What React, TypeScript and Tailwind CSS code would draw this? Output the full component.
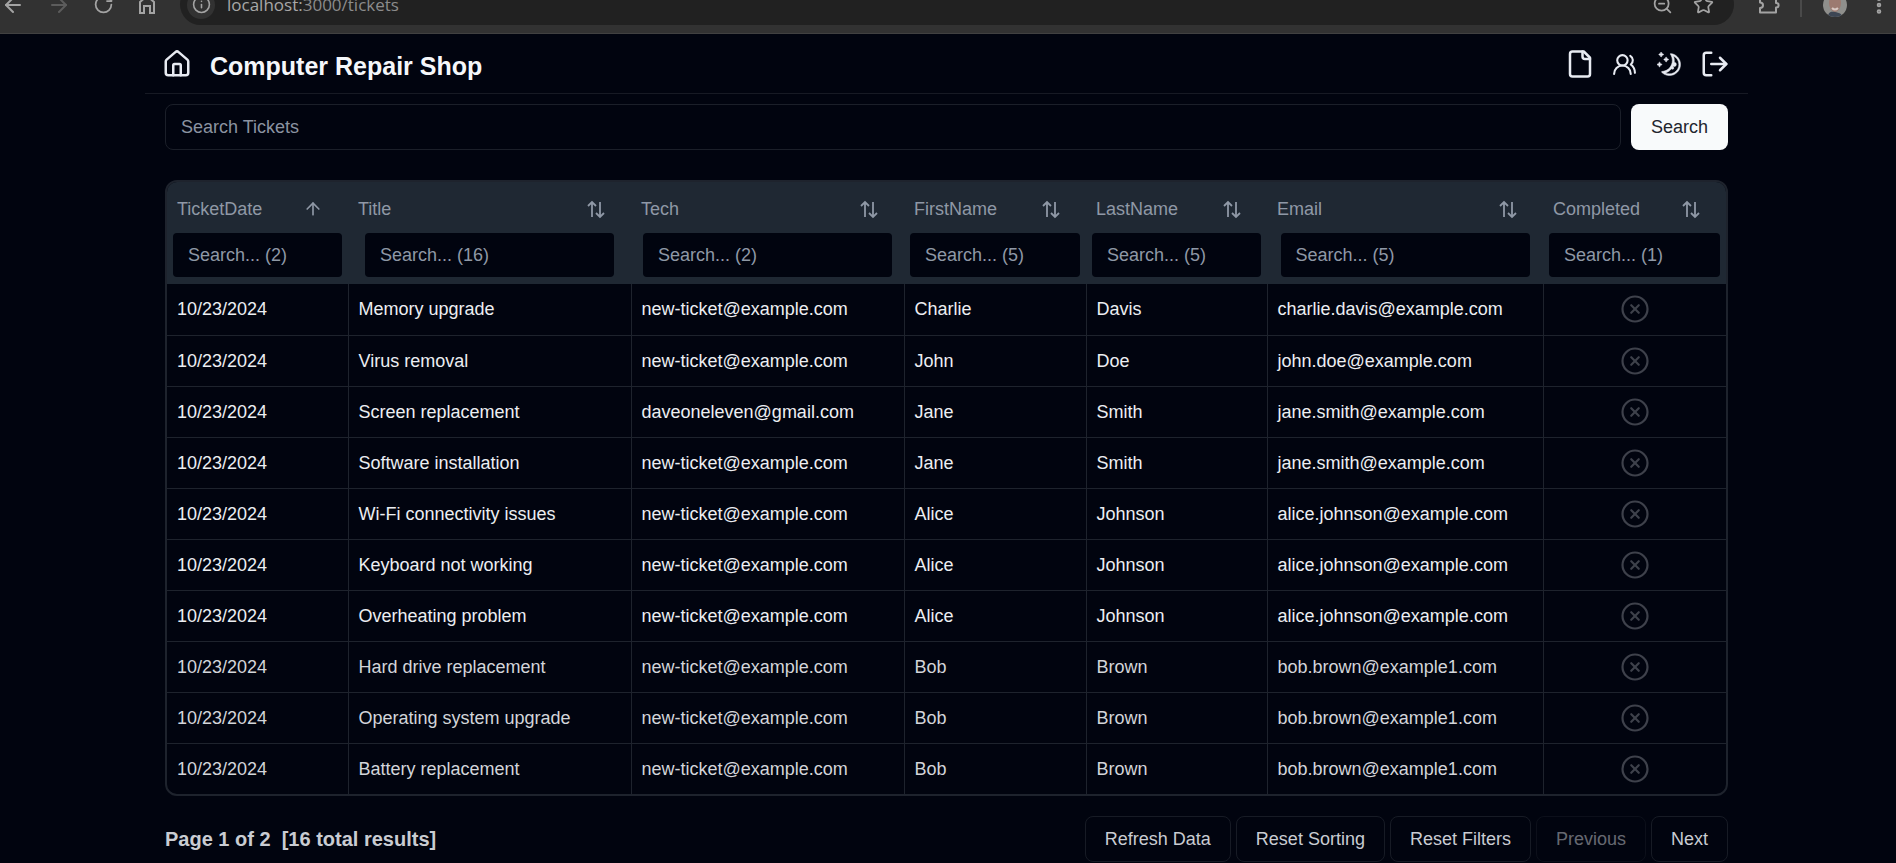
import { useState } from 'react';
import {
  ArrowLeft,
  ArrowRight,
  ArrowUp,
  CircleX,
  EllipsisVertical,
  House,
  Info,
  LogOut,
  RotateCw,
  Star,
  UsersRound,
  ZoomOut,
} from 'lucide-react';
import { RxMoon } from 'react-icons/rx';

interface Ticket {
  ticketDate: string;
  title: string;
  tech: string;
  firstName: string;
  lastName: string;
  email: string;
}

interface Column {
  label: string;
  count: number;
  width: string;
  sorted?: boolean;
}

const NEW = 'new-ticket@example.com';

const tickets: Ticket[] = [
  ['Memory upgrade', NEW, 'Charlie', 'Davis', 'charlie.davis@example.com'],
  ['Virus removal', NEW, 'John', 'Doe', 'john.doe@example.com'],
  ['Screen replacement', 'daveoneleven@gmail.com', 'Jane', 'Smith', 'jane.smith@example.com'],
  ['Software installation', NEW, 'Jane', 'Smith', 'jane.smith@example.com'],
  ['Wi-Fi connectivity issues', NEW, 'Alice', 'Johnson', 'alice.johnson@example.com'],
  ['Keyboard not working', NEW, 'Alice', 'Johnson', 'alice.johnson@example.com'],
  ['Overheating problem', NEW, 'Alice', 'Johnson', 'alice.johnson@example.com'],
  ['Hard drive replacement', NEW, 'Bob', 'Brown', 'bob.brown@example1.com'],
  ['Operating system upgrade', NEW, 'Bob', 'Brown', 'bob.brown@example1.com'],
  ['Battery replacement', NEW, 'Bob', 'Brown', 'bob.brown@example1.com'],
].map(([title, tech, firstName, lastName, email]) => ({
  ticketDate: '10/23/2024',
  title,
  tech,
  firstName,
  lastName,
  email,
}));

const columns: Column[] = [
  { label: 'TicketDate', count: 2, width: 'w-[181px]', sorted: true },
  { label: 'Title', count: 16, width: 'w-[283px]' },
  { label: 'Tech', count: 2, width: 'w-[273px]' },
  { label: 'FirstName', count: 5, width: 'w-[182px]' },
  { label: 'LastName', count: 5, width: 'w-[181px]' },
  { label: 'Email', count: 5, width: 'w-[276px]' },
  { label: 'Completed', count: 1, width: 'w-[183px]' },
];

function BrowserBar() {
  return (
    <div className="h-[34px] shrink-0 overflow-hidden border-b border-[#414141] bg-[#323232] text-[#a3a3a3]">
      <div className="-mt-4 flex h-[41px] items-center">
        <div className="flex w-[180px] items-center gap-[22px] pl-[1px]">
          <ArrowLeft size={24} strokeWidth={2} />
          <ArrowRight size={24} strokeWidth={2} className="text-[#5c5c5c]" />
          <RotateCw size={21} strokeWidth={2} />
          <svg width="22" height="22" viewBox="0 0 22 22" fill="none" stroke="currentColor" strokeWidth="2">
            <path d="M4 19V8l7-6 7 6v11h-4v-7H8v7z" />
          </svg>
        </div>
        <div className="flex h-full flex-1 items-center rounded-full bg-[#212121] pl-[7px] pr-5">
          <span className="flex size-7 items-center justify-center rounded-full bg-[#323232]">
            <Info size={19} />
          </span>
          <span className="flex-1 pl-3 font-['Open_Sans',sans-serif] text-[17px] text-[#8c8c8c]">
            <span className="text-[#a8a8a8]">localhost:</span>3000/tickets
          </span>
          <ZoomOut size={21} className="mr-5" />
          <Star size={21} />
        </div>
        <div className="flex w-[162px] items-center pl-6">
          <svg width="22" height="22" viewBox="0 0 22 22" fill="none" stroke="currentColor" strokeWidth="2">
            <path d="M2 18.500v-4.500c4 0 4-5.500 0-5.500V4h5c0-4 5-4 5 0h6v5c3.500 0 3.500 4.500 0 4.500v5z" strokeLinejoin="round" />
          </svg>
          <span className="ml-5 h-6 w-[2px] bg-[#4a4a4a]" />
          <span className="ml-[21px] flex size-6 items-end justify-center overflow-hidden rounded-full bg-[#8f8f8c]">
            <svg width="24" height="24" viewBox="0 0 24 24">
              <ellipse cx="12" cy="10" rx="6" ry="9" fill="#9c7a70" />
              <path d="M5 24c0-5 3-6 7-5s7 1 7 5z" fill="#3d4654" />
              <path d="M9 15c2 2 4 2 6 0" stroke="#d8c8c2" strokeWidth="2" fill="none" />
            </svg>
          </span>
          <EllipsisVertical size={22} strokeWidth={3} className="ml-[21px]" />
        </div>
      </div>
    </div>
  );
}

function FileIcon() {
  return (
    <svg
      width="30"
      height="30"
      viewBox="0 0 24 24"
      fill="none"
      stroke="currentColor"
      strokeWidth="2"
      strokeLinecap="round"
      strokeLinejoin="round"
    >
      <path d="M15 2H6a2 2 0 0 0-2 2v16a2 2 0 0 0 2 2h12a2 2 0 0 0 2-2V7z" />
      <path d="M14 2v4a2 2 0 0 0 2 2h4" />
    </svg>
  );
}

function Header() {
  const item = 'flex w-[45px] items-center justify-center';
  return (
    <header className="flex h-[60px] items-center justify-between border-b border-[#171a24] pl-[17px] pr-[11px] text-[#e8ebf2]">
      <div className="flex items-center gap-[18px]">
        <a href="#home" aria-label="Home">
          <House size={30} strokeWidth={2} />
        </a>
        <h1 className="pt-1 text-[25px] font-bold leading-8 text-[#f5f7fa]">Computer Repair Shop</h1>
      </div>
      <nav className="flex items-center pt-px">
        <a href="#tickets" aria-label="Tickets" className={item}>
          <FileIcon />
        </a>
        <a href="#customers" aria-label="Customers" className={item}>
          <UsersRound size={25} />
        </a>
        <button aria-label="Toggle theme" className={item}>
          <RxMoon size={25} stroke="currentColor" strokeWidth={0.3} />
        </button>
        <a href="#logout" aria-label="Log out" className={item}>
          <LogOut size={30} />
        </a>
      </nav>
    </header>
  );
}

function SortIcon({ sorted }: { sorted?: boolean }) {
  if (sorted) return <ArrowUp size={20} strokeWidth={2} />;
  return (
    <svg width="20" height="20" viewBox="0 0 20 20" fill="none" stroke="currentColor" strokeWidth="1.800">
      <path d="M6 18V3M2 7l4-4 4 4M14 3v15M10 14l4 4 4-4" />
    </svg>
  );
}

function TicketTable() {
  return (
    <div className="overflow-hidden rounded-xl border-2 border-[#1e232d]">
      <table className="w-full table-fixed border-collapse">
        <thead className="bg-[#1f2833] text-[#8f98a6]">
          <tr>
            {columns.map((col) => (
              <th key={col.label} className={`${col.width} px-[6px] pb-[7px] pt-[5px] text-left font-normal`}>
                <button className="mb-[2px] flex h-11 w-full items-center justify-between pl-1 pr-[19px]">
                  {col.label}
                  <SortIcon sorted={col.sorted} />
                </button>
                <input
                  aria-label={`Filter ${col.label}`}
                  placeholder={`Search... (${col.count})`}
                  className="mx-auto block h-11 w-full max-w-[249px] rounded bg-[#01040f] px-[15px] placeholder:text-[#8f98a6]"
                />
              </th>
            ))}
          </tr>
        </thead>
        <tbody>
          {tickets.map((t) => (
            <tr
              key={t.title}
              className="h-[51px] border-t border-[#1e232d] first:border-t-0 nth-last-[-n+3]:text-[#d3d5da]"
            >
              {Object.values(t).map((value, i) => (
                <td key={i} className="border-r border-[#1e232d] px-[10px]">
                  {value}
                </td>
              ))}
              <td>
                <CircleX size={30} strokeWidth={1.75} className="mx-auto text-[#3e414b]" aria-label="Not completed" />
              </td>
            </tr>
          ))}
        </tbody>
      </table>
    </div>
  );
}

const outline = 'h-[46px] rounded-lg border border-[#171b25] px-[19px]';

function Pagination() {
  return (
    <div className="mt-5 flex items-center justify-between text-[#c9ccd2]">
      <p className="whitespace-pre text-[20px] font-bold">Page 1 of 2  [16 total results]</p>
      <div className="flex gap-[5px]">
        <button className={outline}>Refresh Data</button>
        <button className={outline}>Reset Sorting</button>
        <button className={outline}>Reset Filters</button>
        <button className={`${outline} opacity-50`} disabled>
          Previous
        </button>
        <button className={outline}>Next</button>
      </div>
    </div>
  );
}

export default function App() {
  const [search, setSearch] = useState('');

  return (
    <div className="flex h-screen flex-col overflow-hidden bg-[#01040f] font-['Liberation_Sans',Arial,sans-serif] text-[18px] leading-6 text-[#eceef2]">
      <BrowserBar />
      <div className="pr-[3px]">
        <div className="mx-auto w-full max-w-[1603px]">
          <Header />
          <main className="px-5">
            <form className="mt-[10px] flex gap-[10px]" onSubmit={(e) => e.preventDefault()}>
              <input
                aria-label="Search Tickets"
                placeholder="Search Tickets"
                value={search}
                onChange={(e) => setSearch(e.target.value)}
                className="h-[46px] min-w-0 flex-1 rounded-lg border border-[#1b1f29] bg-transparent px-[15px] placeholder:text-[#8b93a1]"
              />
              <button className="h-[46px] rounded-lg bg-[#f8fafb] px-5 text-[#22252e]">Search</button>
            </form>
            <div className="mt-[30px]">
              <TicketTable />
            </div>
            <Pagination />
          </main>
        </div>
      </div>
    </div>
  );
}
